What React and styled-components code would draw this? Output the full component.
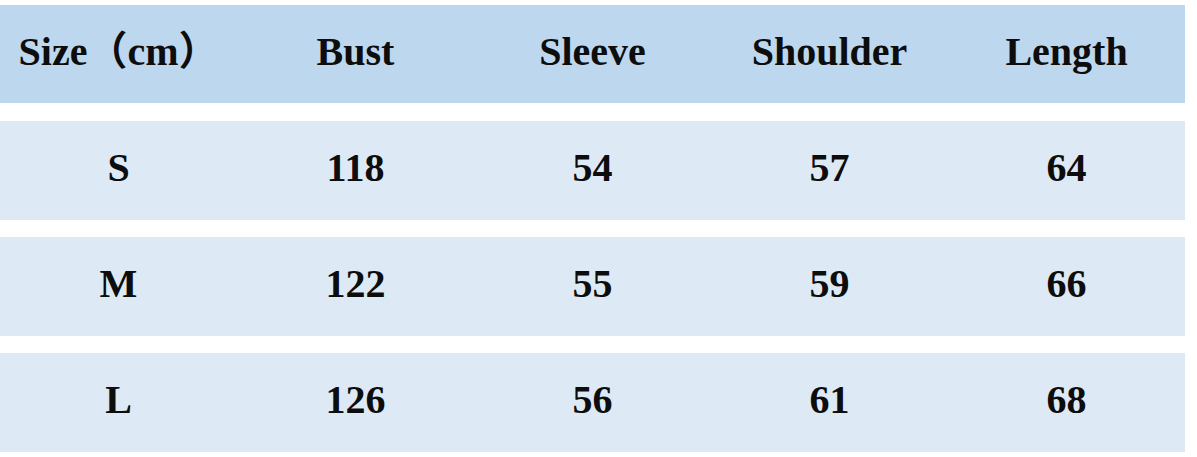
import styled, { createGlobalStyle } from 'styled-components';

const GlobalStyle = createGlobalStyle`
  html, body {
    margin: 0;
    padding: 0;
    background: #ffffff;
  }
  body {
    font-family: "Liberation Serif", "Noto Sans CJK SC", serif;
  }
`;

const headers = ['Size（cm）', 'Bust', 'Sleeve', 'Shoulder', 'Length'];

const rows = [
  ['S', '118', '54', '57', '64'],
  ['M', '122', '55', '59', '66'],
  ['L', '126', '56', '61', '68'],
];

function App() {
  return (
    <>
      <GlobalStyle />
      <Table>
        <HeaderRow>
          {headers.map((h) => (
            <Cell key={h}>{h}</Cell>
          ))}
        </HeaderRow>
        <Body>
          {rows.map((row) => (
            <Row key={row[0]}>
              {row.map((v, i) => (
                <Cell key={i}>{v}</Cell>
              ))}
            </Row>
          ))}
        </Body>
      </Table>
    </>
  );
}

const Table = styled.div`
  width: 1185px;
  padding-top: 5px;
  display: flex;
  flex-direction: column;
  gap: 18px;
`;

const Body = styled.div`
  display: flex;
  flex-direction: column;
  gap: 17px;
`;

const HeaderRow = styled.div`
  display: grid;
  grid-template-columns: repeat(5, 1fr);
  height: 98px;
  background: #bdd7ee;
`;

const Row = styled.div`
  display: grid;
  grid-template-columns: repeat(5, 1fr);
  height: 99px;
  background: #ddeaf6;
`;

const Cell = styled.div`
  display: flex;
  align-items: center;
  justify-content: center;
  padding-bottom: 5px;
  font-size: 40px;
  line-height: 46px;
  font-weight: 700;
  color: #0d0d0d;
  white-space: nowrap;
`;

export default App;
